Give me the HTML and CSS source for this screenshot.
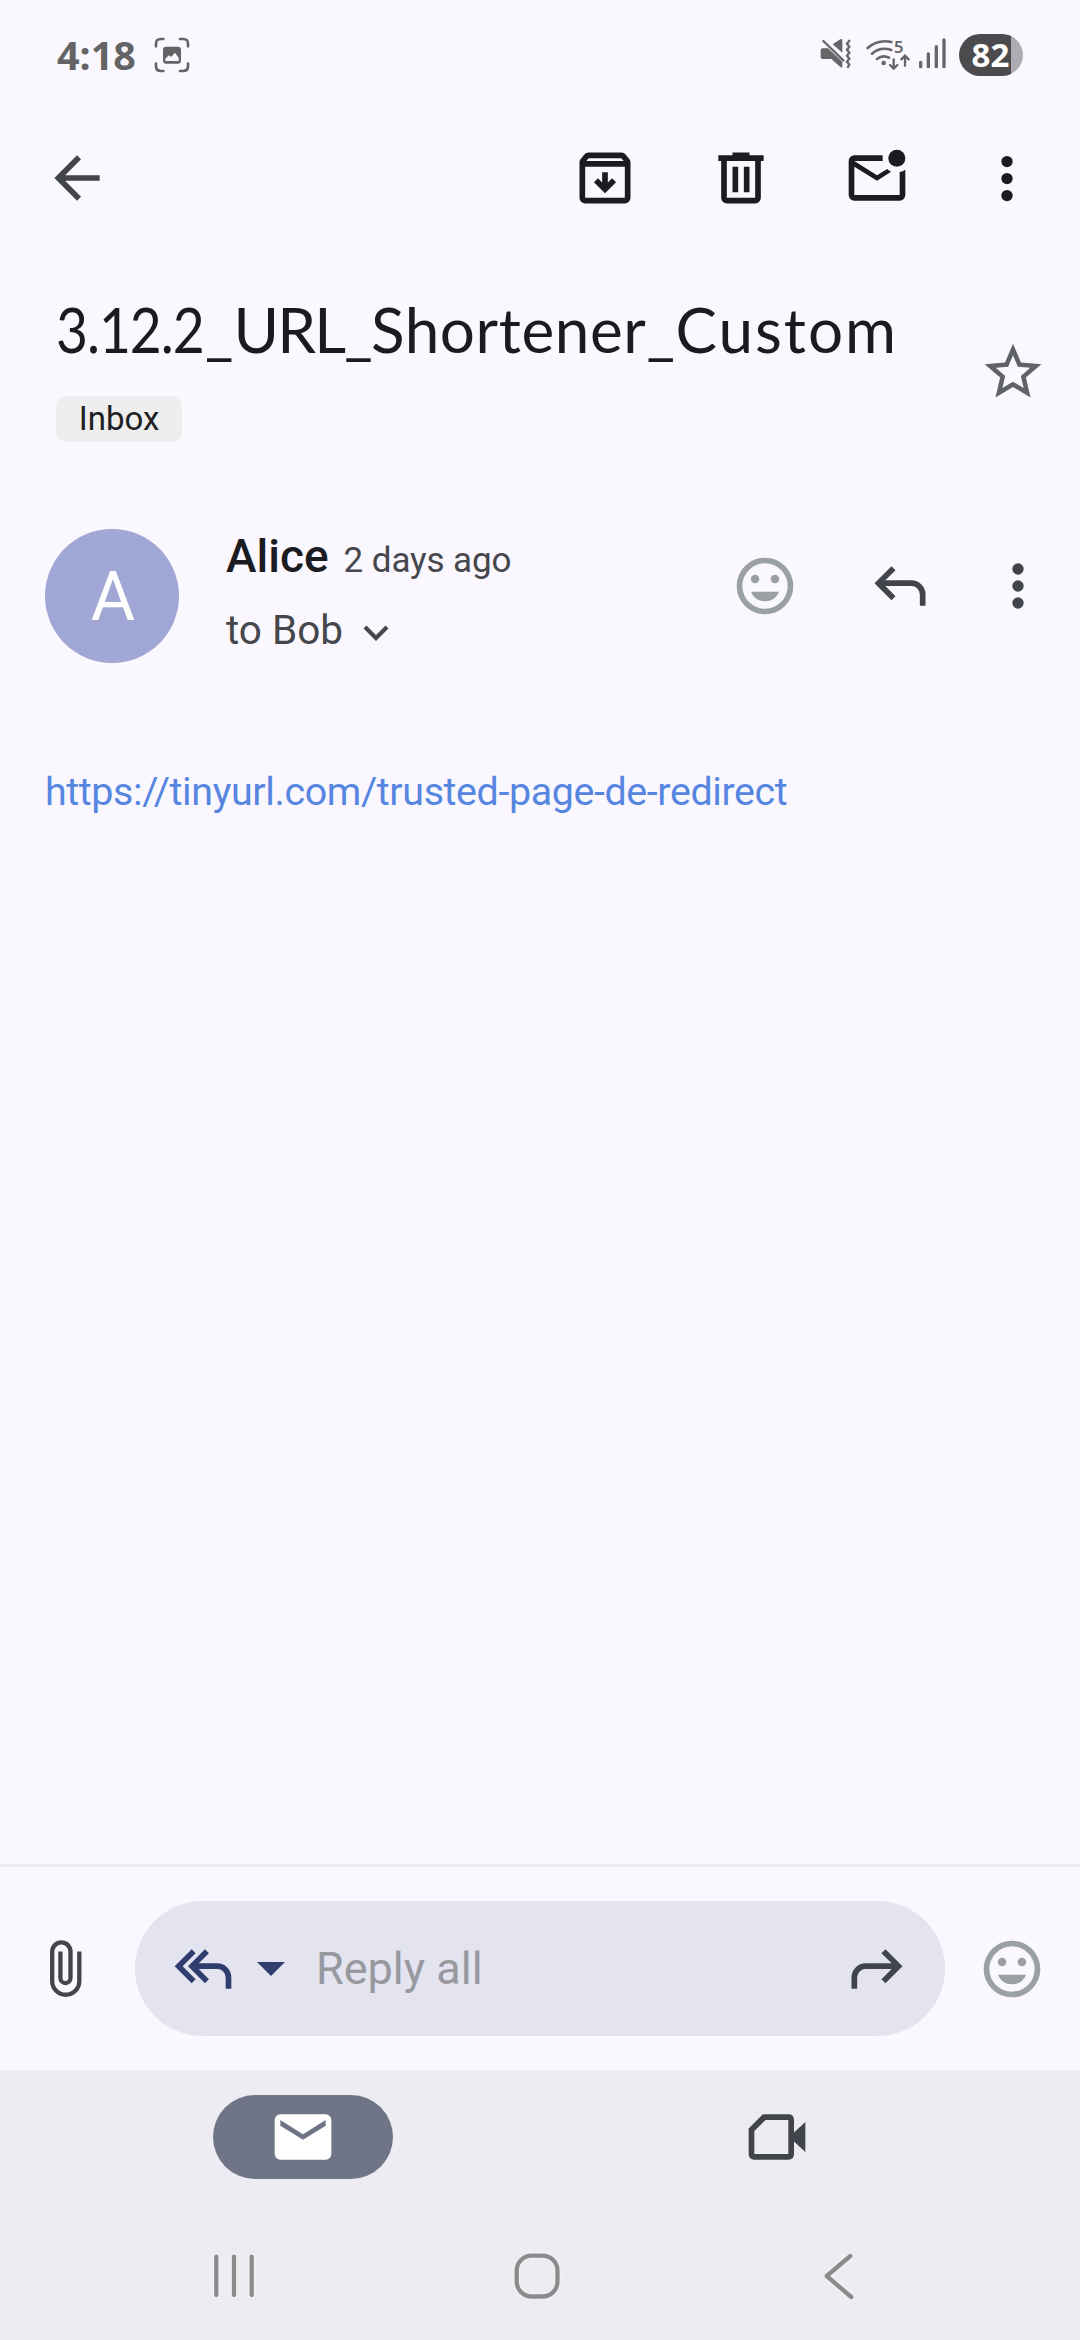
FILE: index.html
```html
<!DOCTYPE html>
<html lang="en">
<head>
<meta charset="utf-8">
<title>Mail</title>
<link rel="stylesheet" href="styles.css">
</head>
<body>
<div class="screen">
  <header class="status">
    <span class="clock">4:18</span>
    <svg class="capture" viewBox="0 0 108 108"><g fill="none" stroke="#646466" stroke-width="8" stroke-linecap="round"><path d="M6 28V20Q6 6 20 6H28M78 6H88Q102 6 102 20V28M102 80V88Q102 102 88 102H78M28 102H20Q6 102 6 88V80"/></g><path fill="#646466" fill-rule="evenodd" d="M36 29H72Q81 29 81 38V71Q81 80 72 80H36Q27 80 27 71V38Q27 29 36 29ZM34 72H74V62L63 47L51 60L45 55L34 65Z"/></svg>
    <svg class="signals" viewBox="0 -30 390 162">
      <g fill="#666668"><path d="M8 34H24L67 74V88Q67 94 61 90L34 66H8Q2 66 2 60V41Q2 34 8 34ZM38 22L61 7Q67 4 67 10V47Z"/></g>
      <g fill="none" stroke="#666668" stroke-linecap="round">
        <path stroke-width="7" d="M10 12L70 70M88 11L81 20L88 29L81 38L88 47L81 56L88 65L81 74L88 83L84 90"/>
        <path stroke-width="8" d="M143 33Q174 6 214 15M156 50Q181 28 214 39M171 66Q188 52 207 62"/>
        <path stroke-width="7" d="M221 67V94M210 84L221 95L232 84M255 86V56M244 67L255 56L266 67"/>
        <path stroke-width="10" d="M302 76V89M325 51V89M349 29V89M372 9V89"/>
      </g>
      <circle cx="191" cy="78" r="7" fill="#666668"/>
      <text x="222" y="47" class="wifi-gen">5</text>
    </svg>
    <span class="battery">82</span>
  </header>

  <nav class="toolbar">
    <svg class="icon soft" viewBox="0 0 24 24"><path d="M7.825 13l5.6 5.6L12 20l-8-8 8-8 1.425 1.4-5.6 5.6H20v2z"/></svg>
    <div class="actions">
      <svg class="icon" viewBox="0 0 24 24"><path fill-rule="evenodd" d="M5 21q-.825 0-1.412-.587T3 19V6.525q0-.35.113-.675t.337-.6L4.7 3.725q.275-.35.687-.538T6.25 3h11.5q.45 0 .863.188t.687.537l1.25 1.525q.225.275.338.6t.112.675V19q0 .825-.587 1.413T19 21zM5.4 6h13.2l-.85-1H6.25zM5 19h14V8H5zM12 17.4l3.9-3.9-1.4-1.4-1.5 1.5V10h-2v3.6l-1.5-1.5-1.4 1.4z"/></svg>
      <svg class="icon" viewBox="0 0 24 24"><path fill-rule="evenodd" d="M7 21q-.825 0-1.412-.587T5 19V6H4V4h5V3h6v1h5v2h-1v13q0 .825-.587 1.413T17 21zM17 6H7v13h10zM9 17h2V8H9zm4 0h2V8h-2z"/></svg>
      <svg class="icon" viewBox="0 0 24 24"><path d="M4 20q-.825 0-1.412-.587T2 18V6q0-.825.588-1.412T4 4h10v2H4l8 5 3.6-2.2q.6.6 1.4 1L12 13 4 8v10h16V9.9q1.1-.2 2-.8V18q0 .825-.587 1.413T20 20z"/><circle cx="19" cy="5" r="3"/></svg>
      <svg class="icon more" viewBox="0 0 24 24"><circle cx="12" cy="6.2" r="2"/><circle cx="12" cy="12.2" r="2"/><circle cx="12" cy="18.2" r="2"/></svg>
    </div>
  </nav>

  <section class="subject">
    <div class="heading">
      <h1><span class="digits">3.12.2</span>_<span class="caps">URL_</span><span class="word">Shortener_</span><span class="tail">Custom</span></h1>
      <span class="label">Inbox</span>
    </div>
    <svg class="icon star" viewBox="0 0 24 24"><path fill-rule="evenodd" d="M22 9.24l-7.19-.62L12 2 9.19 8.63 2 9.24l5.46 4.73L5.82 21 12 17.27 18.18 21l-1.63-7.03zM12 15.4l-3.76 2.27 1-4.28-3.32-2.88 4.38-.38L12 6.1l1.71 4.04 4.38.38-3.32 2.88 1 4.28z"/></svg>
  </section>

  <section class="sender">
    <span class="avatar">A</span>
    <div class="who">
      <p class="from"><strong>Alice</strong><time>2 days ago</time></p>
      <p class="to"><span>to Bob</span><svg class="chevron" viewBox="0 0 26 16"><path d="M2 2L13 13L24 2" fill="none" stroke="#45474c" stroke-width="4.2"/></svg></p>
    </div>
    <div class="tools">
      <svg class="icon smile" viewBox="0 0 24 24"><path fill-rule="evenodd" d="M12 2a10 10 0 1 0 0 20a10 10 0 1 0 0-20zM12 4a8 8 0 1 1 0 16a8 8 0 1 1 0-16z"/><circle cx="8.5" cy="9.5" r="1.5"/><circle cx="15.5" cy="9.5" r="1.5"/><path d="M7 14h10q-1.5 3.4-5 3.4T7 14z"/></svg>
      <svg class="icon soft" viewBox="0 0 24 24"><path d="M19 19v-4q0-1.25-.875-2.125T16 12H6.825l3.6 3.6L9 17l-6-6 6-6 1.425 1.4-3.6 3.6H16q2.075 0 3.538 1.463T21 15v4z"/></svg>
      <svg class="icon soft" viewBox="0 0 24 24"><circle cx="12" cy="6" r="2"/><circle cx="12" cy="12" r="2"/><circle cx="12" cy="18" r="2"/></svg>
    </div>
  </section>

  <main class="message"><a class="link">https://tinyurl.com/trusted-page-de-redirect</a></main>

  <section class="composer">
    <svg class="clip" viewBox="0 0 32 57"><path d="M29.3 11.5V41.2A13.55 13.55 0 0 1 2.2 41.2V11.6A9.15 9.15 0 0 1 20.5 11.6V38A5.05 5.05 0 0 1 10.4 38V11.5" fill="none" stroke="#424549" stroke-width="4.3"/></svg>
    <div class="reply">
      <svg class="icon navy" viewBox="0 0 24 24"><path d="M8 17L2 11l6-6 1.4 1.4L4.8 11l4.6 4.6zM20 19v-4q0-1.25-.875-2.125T17 12h-6.5l3.6 3.6-1.4 1.4-6-6 6-6 1.4 1.4-3.6 3.6H17q2.075 0 3.54 1.46T22 15v4z"/></svg>
      <svg class="caret" viewBox="0 0 28 14"><path d="M0 0H28L14 14Z"/></svg>
      <span class="hint">Reply all</span>
      <svg class="icon soft" viewBox="0 0 24 24"><path d="M5 19v-4q0-1.25.875-2.125T8 12h9.175l-3.6 3.6L15 17l6-6-6-6-1.425 1.4 3.6 3.6H8q-2.075 0-3.538 1.463T3 15v4z"/></svg>
    </div>
    <svg class="icon smile" viewBox="0 0 24 24"><path fill-rule="evenodd" d="M12 2a10 10 0 1 0 0 20a10 10 0 1 0 0-20zM12 4a8 8 0 1 1 0 16a8 8 0 1 1 0-16z"/><circle cx="8.5" cy="9.5" r="1.5"/><circle cx="15.5" cy="9.5" r="1.5"/><path d="M7 14h10q-1.5 3.4-5 3.4T7 14z"/></svg>
  </section>

  <footer class="bottom">
    <div class="tabs">
      <div class="tab"><span class="active"><svg class="icon" viewBox="0 0 24 24"><path fill-rule="evenodd" d="M4 20q-.825 0-1.412-.587T2 18V6q0-.825.588-1.412T4 4h16q.825 0 1.413.588T22 6v12q0 .825-.587 1.413T20 20zM12 13l8-5V6l-8 5-8-5v2z"/></svg></span></div>
      <div class="tab"><svg class="icon soft" viewBox="0 0 24 24"><path fill-rule="evenodd" d="M7 4h9q2 0 2 2v4.4L22 6.7v10.6L18 13.6V18q0 2-2 2H4q-2 0-2-2V9zM7.9 6L4 9.9V18h12V6z"/></svg></div>
    </div>
    <div class="system">
      <svg viewBox="0 0 60 60"><path d="M12.3 10.7V49M30 10.7V49M47.7 10.7V49"/></svg>
      <svg viewBox="0 0 60 60"><rect x="9.7" y="9.7" width="40.8" height="40.8" rx="15"/></svg>
      <svg viewBox="0 0 60 60"><path d="M40.3 10L16.7 30L41.3 51"/></svg>
    </div>
  </footer>
</div>
</body>
</html>
```
FILE: styles.css
```css
* { box-sizing: border-box; }
body, h1, p { margin: 0; font-weight: 400; }
svg { display: block; flex: none; }
.screen {
  width: 1080px; height: 2340px; display: flex; flex-direction: column;
  background: #faf7ff; color: #1b1b1f; overflow: hidden;
  font-family: Roboto, "Noto Sans", sans-serif;
}
.icon { width: 68px; height: 68px; fill: #1b1c21; }
.icon.soft { fill: #41444b; }
.icon.smile { fill: #9aa0a3; }
.icon.navy { fill: #2f3e6e; }

.status { height: 110px; display: flex; align-items: center; padding: 0 57px; }
.clock { font: 700 39.5px/60px "Noto Sans", sans-serif; color: #646466; width: 97px; }
.capture { width: 36px; height: 36px; }
.signals { width: 130px; height: 54px; margin: -2px 0 0 630px; }
.wifi-gen { font: 600 50px "Noto Sans", sans-serif; fill: #666668; }
.battery {
  width: 64px; height: 42px; margin-left: 9px; border-radius: 21px; padding-right: 1px;
  background: linear-gradient(90deg, #4b4b4d 52px, #aeacb2 52px);
  color: #fff; font: 700 33px/42px "Noto Sans", sans-serif; text-align: center;
}

.toolbar { height: 136px; display: flex; align-items: center; justify-content: space-between; padding: 0 39px 0 43px; }
.actions { display: flex; gap: 68px; }
.actions .more { margin-left: -6px; }

.subject { height: 283px; display: flex; padding: 44px 33px 0 56px; }
.heading { flex: 1; }
.subject h1 { font: 400 62px/80px Lato, sans-serif; white-space: nowrap; margin-top: -1px; height: 80px; }
.digits { display: inline-block; letter-spacing: -1.2px; transform: scaleX(.89); transform-origin: left; margin-right: -17px; }
.caps { letter-spacing: -1.8px; }
.word { letter-spacing: .6px; }
.tail { letter-spacing: 2px; }
.label {
  display: block; width: 126px; height: 46px; margin-top: 27px; border-radius: 10px;
  background: #eee; color: #202124; font-size: 33px; line-height: 46px; text-align: center;
}
.star { margin-top: 48px; fill: #5f6268; }

.sender { height: 134px; display: flex; padding: 0 28px 0 45px; }
.avatar {
  width: 134px; height: 134px; border-radius: 50%; background: #a1a7d4; color: #fff;
  font-size: 68px; line-height: 136px; text-align: center; padding-left: 2px;
}
.who { flex: 1; padding: 0 0 0 47px; color: #45474c; }
.from { display: flex; align-items: baseline; height: 66px; line-height: 55px; gap: 15px; }
.from strong { font-weight: 500; font-size: 46px; color: #1b1c21; }
.from time { font-size: 35px; letter-spacing: -.1px; }
.to { display: flex; align-items: center; height: 71px; font-size: 40.5px; line-height: 71px; gap: 20px; }
.chevron { width: 26px; height: 16px; margin-top: 4px; }
.tools { display: flex; height: 114px; align-items: center; gap: 67px; }
.tools .icon:last-child { margin-left: -17px; }

.message { flex: 1; padding: 98px 45px 0; }
.link { display: block; font-size: 39.4px; line-height: 62px; letter-spacing: -.38px; color: #5686e0; }

.composer { height: 206px; border-top: 3px solid #e8eaed; display: flex; align-items: center; padding: 0 34px 0 50px; }
.clip { width: 32px; height: 57px; }
.reply {
  width: 810px; height: 135px; margin: 0 33px 0 53px; border-radius: 68px; background: #e3e4ef;
  display: flex; align-items: center; padding: 0 34px;
}
.caret { width: 28px; height: 14px; margin-left: 20px; fill: #2f3e6e; }
.hint { flex: 1; margin-left: 31px; font-size: 45px; color: #98989f; }

.bottom { height: 270px; background: #edecf2; }
.tabs { display: flex; height: 134px; padding: 0 66px; }
.tab { flex: 1; display: flex; align-items: center; justify-content: center; }
.active { width: 180px; height: 84px; border-radius: 42px; background: #6f7487; display: flex; align-items: center; justify-content: center; }
.active .icon { fill: #fff; }
.system { display: flex; justify-content: space-between; padding: 42px 210px 0 204px; }
.system svg { width: 60px; height: 60px; fill: none; stroke: #8b8b8b; stroke-width: 4.3; stroke-linecap: round; stroke-linejoin: round; filter: drop-shadow(0 0 1px #fff); }
```
